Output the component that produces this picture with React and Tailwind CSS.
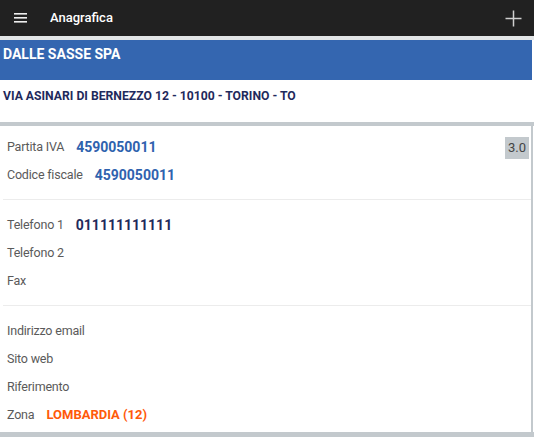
const rowsA = [
  { label: "Partita IVA", value: "4590050011", tone: "blue" },
  { label: "Codice fiscale", value: "4590050011", tone: "blue" },
];

const rowsB = [
  { label: "Telefono 1", value: "011111111111", tone: "navy" },
  { label: "Telefono 2" },
  { label: "Fax" },
];

const rowsC = [
  { label: "Indirizzo email" },
  { label: "Sito web" },
  { label: "Riferimento" },
  { label: "Zona", value: "LOMBARDIA (12)", tone: "orange" },
];

const toneClass = {
  blue: "text-[14px] text-[#2f62ae]",
  navy: "text-[14px] text-[#1f2a5c]",
  orange: "text-[13px] text-[#ff5a0a]",
};

function Row({ label, value, tone }) {
  return (
    <div className="flex h-7 items-center gap-3 pl-[7px]">
      <span className="text-[12.5px] tracking-[-0.2px] text-[#5a5a5a]">{label}</span>
      {value && <span className={`font-bold ${toneClass[tone]}`}>{value}</span>}
    </div>
  );
}

export default function App() {
  return (
    <div className="flex h-[437px] w-[534px] flex-col overflow-hidden bg-white" style={{ fontFamily: "Roboto, 'Liberation Sans', sans-serif" }}>
      <header className="flex h-9 items-center bg-[#212121] pr-3">
        <svg width="13" height="10" viewBox="0 0 13 10" className="ml-[14px]">
          <rect x="0" y="0" width="13" height="1.6" fill="#eee" />
          <rect x="0" y="4" width="13" height="1.6" fill="#eee" />
          <rect x="0" y="8" width="13" height="1.6" fill="#eee" />
        </svg>
        <h1 className="ml-[23px] text-[13px] font-medium text-white">Anagrafica</h1>
        <svg width="17" height="17" viewBox="0 0 17 17" className="ml-auto">
          <path d="M8.5 0.5v16M0.5 8.5h16" stroke="#cfcfcf" strokeWidth="1.5" />
        </svg>
      </header>
      <div className="h-1 bg-[#e2e5e7]" />
      <div className="mr-[2px] h-10 bg-[#3466b0] px-[3px] pt-[4px] text-[14px] font-bold text-white">DALLE SASSE SPA</div>
      <div className="flex h-[42px] items-start px-[3px] pt-[7px] text-[12.2px] font-bold text-[#1f2a5c]">
        VIA ASINARI DI BERNEZZO 12 - 10100 - TORINO - TO
      </div>
      <div className="h-1 bg-[#c3c9cd]" />
      <div className="relative mr-px flex-1 border-r-2 border-[#c3c9cd] pt-[7px]">
        <span className="absolute right-[2px] top-[11px] bg-[#c3c9cd] px-[3px] py-[1px] text-[13px] text-[#444]">3.0</span>
        {rowsA.map((r) => <Row key={r.label} {...r} />)}
        <div className="ml-[3px] mt-[10px] mb-[11px] h-px bg-[#ececec]" />
        {rowsB.map((r) => <Row key={r.label} {...r} />)}
        <div className="ml-[3px] mt-[10px] mb-[11px] h-px bg-[#ececec]" />
        {rowsC.map((r) => <Row key={r.label} {...r} />)}
      </div>
      <div className="h-[5px] bg-[#c3c9cd]" />
    </div>
  );
}
